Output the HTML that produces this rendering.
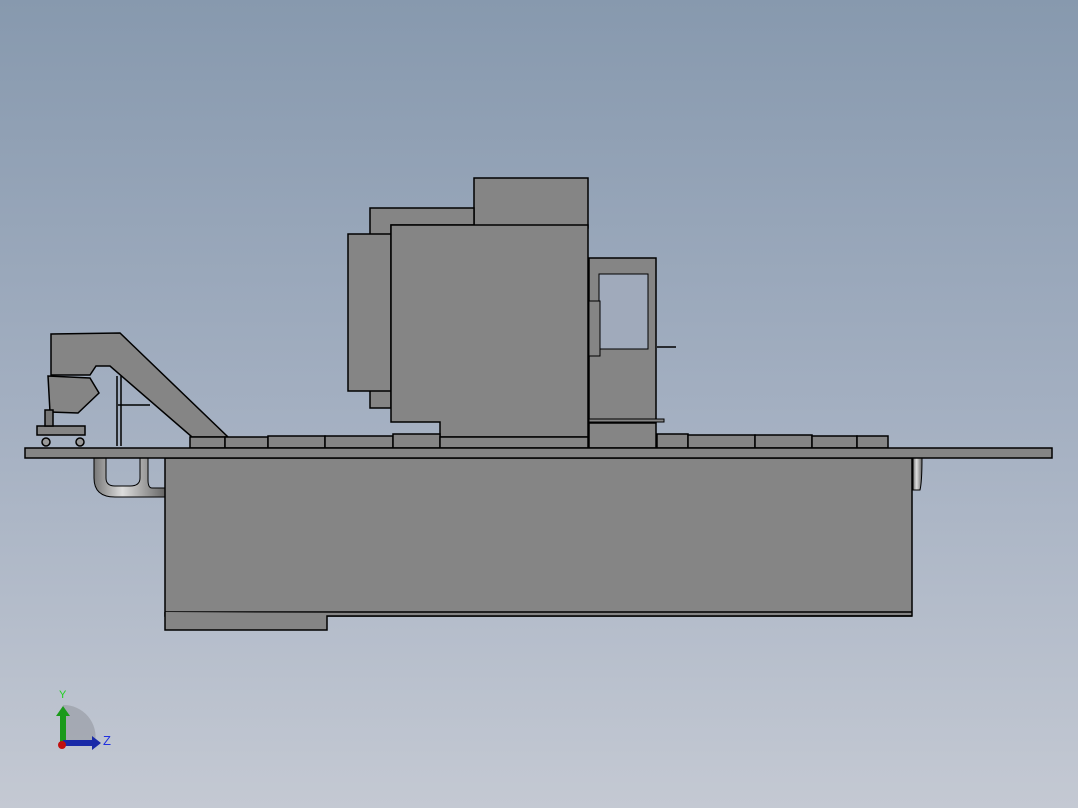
<!DOCTYPE html>
<html><head><meta charset="utf-8"><style>
html,body{margin:0;padding:0;width:1078px;height:808px;overflow:hidden}
body{background:linear-gradient(#8799ae 0%,#a3afc1 50%,#c4c9d3 100%)}
svg{display:block}
</style></head><body>
<svg width="1078" height="808" viewBox="0 0 1078 808" xmlns="http://www.w3.org/2000/svg">
<defs>
<linearGradient id="pipe" x1="0" x2="1"><stop offset="0" stop-color="#777"/><stop offset=".4" stop-color="#ddd"/><stop offset="1" stop-color="#666"/></linearGradient>
</defs>
<g fill="#858585" stroke="#000" stroke-width="1.5">
<path d="M94 458 V478 Q94 497 115 497 H165 V488 H152 Q148 488 148 480 V458 H140 V478 Q140 486 130 486 H115 Q106 486 106 478 V458 Z" fill="url(#pipe)" stroke-width="1"/>
<path d="M641 458 V487 Q648 497 655 487 V458 Z" fill="url(#pipe)" stroke-width="1"/>
<path d="M913 458 V490 H920 Q922 482 922 458 Z" fill="url(#pipe)" stroke-width="1"/>
<rect x="165" y="458" width="747" height="158"/>
<line x1="165" y1="612" x2="912" y2="612"/>
<path d="M165 612 V630 H327 V616 H912"/>
<path d="M117 376 V446 M121 376 V446 M118 405 H150" fill="none" stroke-width="1.5"/>
<path d="M51 334 L120 333 L228 437 L192 437 L110 366 L96 366 L90 375 L51 375 Z"/>
<path d="M48 376 L90 378 L99 393 L78 413 L50 412 Z"/>
<rect x="37" y="426" width="48" height="9"/>
<circle cx="46" cy="442" r="4" fill="#999"/><circle cx="80" cy="442" r="4" fill="#999"/>
<rect x="45" y="410" width="8" height="16" fill="#777"/>
<rect x="474" y="178" width="114" height="50"/>
<path d="M370 408 V208 H474 V225 H391 V408 Z"/>
<rect x="348" y="234" width="43" height="157"/>
<path d="M391 225 H588 V437 H440 V422 H391 Z"/>
<rect x="589" y="258" width="67" height="164"/>
<rect x="599" y="274" width="49" height="75" fill="#a0aabb" stroke-width="1"/>
<rect x="589" y="301" width="11" height="55" stroke-width="1"/>
<line x1="657" y1="347" x2="676" y2="347" stroke-width="1.5"/>
<rect x="589" y="419" width="75" height="3" stroke-width="1"/>
<rect x="589" y="423" width="67" height="25"/>
<rect x="190" y="437" width="35" height="11"/>
<rect x="225" y="437" width="43" height="11"/>
<rect x="268" y="436" width="57" height="12"/>
<rect x="325" y="436" width="68" height="12"/>
<rect x="393" y="434" width="47" height="14"/>
<rect x="440" y="437" width="148" height="11"/>
<rect x="657" y="434" width="31" height="14"/>
<rect x="688" y="435" width="67" height="13"/>
<rect x="755" y="435" width="57" height="13"/>
<rect x="812" y="436" width="45" height="12"/>
<rect x="857" y="436" width="31" height="12"/>
<rect x="25" y="448" width="1027" height="10"/>
</g>
<path d="M63 705 A32 32 0 0 1 95 743 L63 743 Z" fill="#9a9ea6" opacity=".7"/>
<rect x="60" y="714" width="6" height="29" fill="#1a9a1a"/>
<path d="M56 716 L63 706 L70 716 Z" fill="#1a9a1a"/>
<rect x="63" y="740" width="30" height="6" fill="#1a2aa8"/>
<path d="M92 736 L101 743 L92 750 Z" fill="#1a2aa8"/>
<circle cx="62" cy="745" r="4" fill="#c01010"/>
<text x="59" y="698" font-family="Liberation Sans, sans-serif" font-size="11" fill="#20d020">Y</text>
<text x="103" y="745" font-family="Liberation Sans, sans-serif" font-size="13" fill="#2030e0">Z</text>
</svg>
</body></html>
